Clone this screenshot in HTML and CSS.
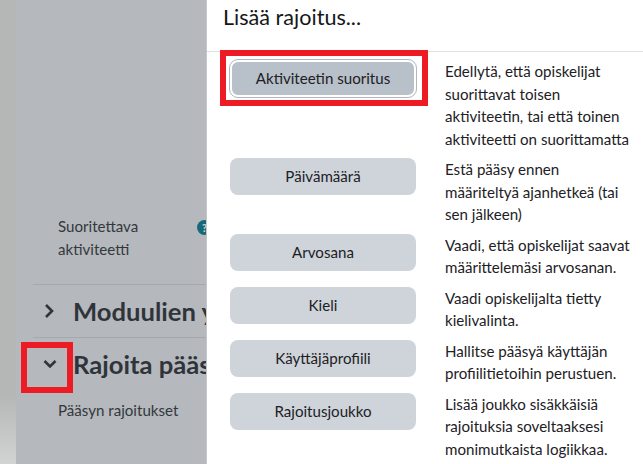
FILE: index.html
```html
<!DOCTYPE html>
<html lang="fi">
<head>
<meta charset="utf-8">
<title>Lisää rajoitus</title>
<link rel="stylesheet" href="styles.css">
</head>
<body>
<div class="backdrop">
  <div class="strip"></div>
  <div class="page">
    <div class="field">
      <span class="field-label">Suoritettava aktiviteetti</span>
      <span class="help">?</span>
    </div>
    <div class="section closed">
      <svg class="chev chev-right" width="10" height="16" viewBox="0 0 10 16"><path d="M2 2l6 6-6 6" fill="none" stroke="#2f343b" stroke-width="2.6"/></svg>
      <h3 class="section-title">Moduulien yhteiset asetukset</h3>
    </div>
    <div class="section open">
      <svg class="chev chev-down" width="14" height="10" viewBox="0 0 14 10"><path d="M1.5 2l5.5 5.500 5.500-5.500" fill="none" stroke="#2f343b" stroke-width="2.6"/></svg>
      <h3 class="section-title">Rajoita pääsyä</h3>
    </div>
    <div class="access">Pääsyn rajoitukset</div>
  </div>
  <div class="mark mark-left"></div>
</div>
<main class="modal">
  <h2 class="modal-title">Lisää rajoitus...</h2>
  <div class="list">
    <div class="row">
      <button class="btn focused">Aktiviteetin suoritus</button>
      <p class="desc">Edellytä, että opiskelijat suorittavat toisen aktiviteetin, tai että toinen aktiviteetti on suorittamatta</p>
    </div>
    <div class="row">
      <button class="btn">Päivämäärä</button>
      <p class="desc">Estä pääsy ennen määriteltyä ajanhetkeä (tai sen jälkeen)</p>
    </div>
    <div class="row">
      <button class="btn">Arvosana</button>
      <p class="desc">Vaadi, että opiskelijat saavat määrittelemäsi arvosanan.</p>
    </div>
    <div class="row">
      <button class="btn">Kieli</button>
      <p class="desc">Vaadi opiskelijalta tietty kielivalinta.</p>
    </div>
    <div class="row">
      <button class="btn">Käyttäjäprofiili</button>
      <p class="desc">Hallitse pääsyä käyttäjän profiilitietoihin perustuen.</p>
    </div>
    <div class="row">
      <button class="btn">Rajoitusjoukko</button>
      <p class="desc">Lisää joukko sisäkkäisiä rajoituksia soveltaaksesi monimutkaista logiikkaa.</p>
    </div>
  </div>
  <div class="mark mark-top"></div>
</main>
</body>
</html>
```
FILE: styles.css
```css
* { box-sizing: border-box; }
html, body { margin: 0; height: 100%; overflow: hidden; }
body {
  display: flex;
  width: 643px;
  height: 464px;
  font-family: "Lato", "Liberation Sans", sans-serif;
  font-size: 15.1px;
  line-height: 22.5px;
  color: #1d2125;
  background: #fff;
}
.backdrop {
  position: relative;
  flex: 0 0 206px;
  display: flex;
  overflow: hidden;
  background: #b5b8bc;
  color: #33383e;
}
.strip {
  flex: 0 0 16px;
  background: linear-gradient(180deg, #b5b7b6 0, #b5b7b6 395px, #d2d3d3 464px);
}
.page {
  flex: 0 0 300px;
  padding: 215px 0 0 17px;
}
.field {
  display: flex;
  height: 70px;
  padding-left: 25px;
  border-bottom: 1px solid #a5a9af;
}
.field-label { width: 105px; }
.help {
  position: absolute;
  left: 197px;
  top: 220px;
  width: 15px;
  height: 15px;
  border-radius: 50%;
  background: #17697a;
  color: #c8ced2;
  font-size: 11px;
  font-weight: 900;
  line-height: 15px;
  text-align: center;
}
.section {
  position: relative;
  display: flex;
  align-items: center;
  white-space: nowrap;
}
.section.closed { height: 53px; border-bottom: 1px solid #a5a9af; }
.section.open { height: 52px; }
.section-title {
  margin: 0 0 1px;
  font-size: 25.6px;
  font-weight: 700;
  line-height: 30px;
  color: #2f343b;
  padding-left: 40px;
}
.chev { position: absolute; }
.chev-right { left: 11px; top: 18px; }
.chev-down { left: 10px; top: 21px; }
.access { margin-top: 9px; padding-left: 25px; }
.mark { position: absolute; border: 6px solid #ed1c24; }
.mark-left { left: 21px; top: 342px; width: 52px; height: 51px; }
.modal {
  position: relative;
  flex: 1;
  min-width: 0;
  border-left: 1px solid #c4c6c8;
}
.modal-title {
  margin: 0;
  height: 52px;
  padding: 1px 0 0 16px;
  border-bottom: 1px solid #dee2e6;
  font-size: 21.6px;
  font-weight: 400;
  line-height: 32px;
  color: #14171a;
}
.list {
  display: flex;
  flex-direction: column;
  gap: 8px;
  padding: 8px 0 0 23px;
}
.row {
  display: flex;
  align-items: flex-start;
  gap: 29px;
}
.btn {
  flex: 0 0 186px;
  height: 37px;
  border: 0;
  border-radius: 8px;
  background: #ced4da;
  color: #1d2125;
  font: inherit;
  padding: 0;
}
.focused {
  background: #b8c0c9;
  border: 2px solid #fff;
  outline: 1px solid #b0b7bf;
  outline-offset: 0;
}
.desc { margin: 0; width: 192px; }
.mark-top { left: 13px; top: 50px; width: 208px; height: 56px; }
```
